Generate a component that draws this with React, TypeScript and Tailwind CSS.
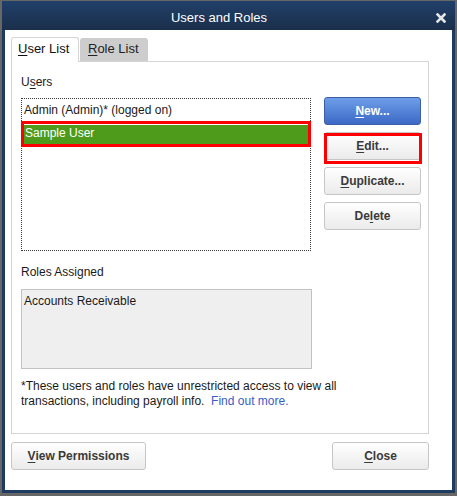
import React from "react";

const U = ({ children }: { children: React.ReactNode }) => (
  <span className="underline underline-offset-[2px] decoration-1">{children}</span>
);

function Btn({
  children,
  primary,
  className = "",
}: {
  children: React.ReactNode;
  primary?: boolean;
  className?: string;
}) {
  return (
    <div
      className={
        "h-[28px] flex items-center justify-center rounded-[3px] border text-[12px] font-bold leading-[14px] " +
        (primary
          ? "bg-gradient-to-b from-[#6e9ee8] to-[#3c69c6] border-[#3b5ea6] text-white "
          : "bg-gradient-to-b from-[#ffffff] to-[#ebebeb] border-[#c6c6c6] text-[#3a3a3a] ") +
        className
      }
    >
      {children}
    </div>
  );
}

export default function App() {
  return (
    <div className="w-[457px] h-[496px] bg-[#676767] pt-[1px] pl-[2px] pr-[2px] pb-[3px] font-['Liberation_Sans',Arial,sans-serif]">
      <div className="w-full h-full flex flex-col bg-[#1e3c5f]">
        {/* Title bar */}
        <div className="h-[29px] flex bg-gradient-to-b from-[#21406a] to-[#1a2f4b]">
          <div className="flex-1 text-center text-white text-[13px] leading-[15px] pt-[9px]">
            Users and Roles
          </div>
          <div className="w-[10px] mr-[9px] pt-[12px]">
            <svg width="10" height="10" viewBox="0 0 10 10">
              <path d="M1.5 1.5 L8.5 8.5 M8.5 1.5 L1.5 8.5" stroke="#e6e6e6" strokeWidth="2.6" strokeLinecap="square" />
            </svg>
          </div>
        </div>
        {/* Content */}
        <div className="flex-1 mx-[3px] mb-[3px] bg-white pt-[7px] pl-[6px]">
          {/* Tabs */}
          <div className="flex items-end h-[24px]">
            <div className="relative z-10 -mb-px h-[25px] w-[68px] bg-white border border-b-0 border-[#d5d5d5] rounded-t-[3px] pl-[6px] pt-[3px] text-[13px] leading-[15px] text-[#111]">
              <U>U</U>ser List
            </div>
            <div className="ml-[1px] h-[23px] w-[68px] bg-[#cdcdcd] rounded-t-[3px] pl-[8px] pt-[3px] text-[13px] leading-[15px] text-[#222]">
              <U>R</U>ole List
            </div>
          </div>
          {/* Panel */}
          <div className="w-[418px] h-[373px] border border-[#d5d5d5] pl-[9px] pt-[13px] text-[12px] text-[#1a1a1a]">
            <div className="flex">
              <div className="w-[290px]">
                <div className="h-[14px] leading-[14px]">
                  U<U>s</U>ers
                </div>
                <div className="relative mt-[9px] h-[153px] border border-dotted border-[#3a3a3a]">
                  <div className="h-[26px] pt-[4px] pl-[2px] leading-[14px]">Admin (Admin)* (logged on)</div>
                  <div className="mx-[2px] h-[20px] bg-[#4e9a1b] text-white pl-[1px] pt-[1px] leading-[14px]">
                    Sample User
                  </div>
                  <div className="absolute top-[22px] left-[-1px] right-[-1px] h-[26px] border-[3px] border-[#ff0000]" />
                </div>
              </div>
              <div className="ml-[13px] mt-[22px] w-[97px] flex flex-col gap-[7px]">
                <Btn primary>
                  <span>
                    <U>N</U>ew...
                  </span>
                </Btn>
                <div className="relative">
                  <Btn>
                    <span>
                      <U>E</U>dit...
                    </span>
                  </Btn>
                  <div className="absolute top-[1px] left-0 w-[98px] h-[31px] border-[3px] border-[#ff0000]" />
                </div>
                <Btn>
                  <span>
                    <U>D</U>uplicate...
                  </span>
                </Btn>
                <Btn>
                  <span>
                    De<U>l</U>ete
                  </span>
                </Btn>
              </div>
            </div>
            <div className="mt-[14px] h-[14px] leading-[14px]">Roles Assigned</div>
            <div className="mt-[10px] w-[291px] h-[80px] border border-[#c2c2c2] bg-[#efefef] pl-[2px] pt-[4px] leading-[14px]">
              Accounts Receivable
            </div>
            <div className="mt-[10px] leading-[15px] whitespace-nowrap">
              *These users and roles have unrestricted access to view all
              <br />
              transactions, including payroll info.{"\u00a0 "}
              <span className="text-[#3b5cc8]">Find out more.</span>
            </div>
          </div>
          {/* Bottom buttons */}
          <div className="mt-[8px] w-[418px] flex justify-between">
            <Btn className="w-[135px]">
              <span>
                <U>V</U>iew Permissions
              </span>
            </Btn>
            <Btn className="w-[97px]">
              <span>
                <U>C</U>lose
              </span>
            </Btn>
          </div>
        </div>
      </div>
    </div>
  );
}
